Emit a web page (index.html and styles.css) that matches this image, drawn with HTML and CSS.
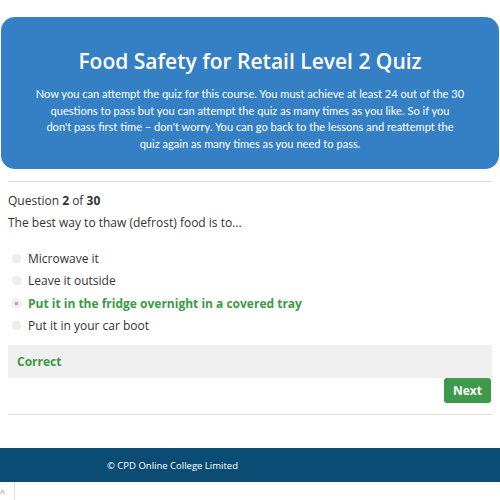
FILE: index.html
```html
<!DOCTYPE html>
<html lang="en">

<head>
    <meta charset="UTF-8">
    <meta name="viewport" content="width=device-width, initial-scale=1.0">
    <title>Food Safety for Retail Level 2 Quiz</title>
    <link rel="stylesheet" href="styles.css">
</head>

<body>
    <div class="hero">
        <h1>Food Safety for Retail Level 2 Quiz</h1>
        <p>Now you can attempt the quiz for this course. You must achieve at least 24 out of the 30<br>
            questions to pass but you can attempt the quiz as many times as you like. So if you<br>
            don't pass first time – don't worry. You can go back to the lessons and reattempt the<br>
            quiz again as many times as you need to pass.</p>
    </div>

    <div class="quiz">
        <hr class="rule">
        <div class="counter">Question <b>2</b> of <b>30</b></div>
        <div class="question">The best way to thaw (defrost) food is to...</div>

        <ul class="answers">
            <li><span class="radio"></span>Microwave it</li>
            <li><span class="radio"></span>Leave it outside</li>
            <li class="right"><span class="radio checked"></span>Put it in the fridge overnight in a covered tray</li>
            <li><span class="radio"></span>Put it in your car boot</li>
        </ul>

        <div class="feedback">Correct</div>
        <div class="actions">
            <button class="next-btn">Next</button>
        </div>
        <hr class="rule">
    </div>

    <footer class="footer">
        <span>© CPD Online College Limited</span>
    </footer>

    <div class="to-top">^</div>
</body>

</html>
```

FILE: styles.css
```css
body {
    margin: 0;
    font-family: "Open Sans", "Noto Sans", sans-serif;
    color: #333;
    background: white;
}

.hero {
    margin: 17px 1px 0 1px;
    height: 152px;
    box-sizing: border-box;
    padding: 27px 10px 0 10px;
    background-color: #3580c4;
    border-radius: 14px;
    color: white;
    text-align: center;
}

.hero h1 {
    margin: 0;
    font-size: 21px;
    font-weight: 600;
    line-height: 34px;
}

.hero p {
    margin: 8px 0 0 0;
    font-family: Lato, "Open Sans", sans-serif;
    font-size: 11.1px;
    line-height: 16.7px;
    white-space: nowrap;
}

.quiz {
    padding: 0 8px;
}

.rule {
    margin: 12px 0 0 0;
    border: none;
    border-top: 1px solid #ddd;
}

.counter {
    margin-top: 10px;
    font-size: 12px;
    line-height: 18px;
}

.question {
    margin-top: 4px;
    font-size: 12px;
    line-height: 18px;
}

.answers {
    list-style: none;
    margin: 15px 0 0 0;
    padding: 0;
}

.answers li {
    display: flex;
    align-items: center;
    height: 22.5px;
    font-size: 12px;
}

.answers li.right {
    color: #3a9a45;
    font-weight: 700;
}

.radio {
    width: 7px;
    height: 7px;
    margin: 0 7px 0 4px;
    border-radius: 50%;
    background: #efefef;
    border: 1px solid #e6e6e6;
}

.radio.checked {
    background: radial-gradient(circle, #aaa 1.5px, #efefef 2px);
}

.feedback {
    margin-top: 8px;
    height: 33px;
    padding: 0 9px;
    display: flex;
    align-items: center;
    background: #f0f0f0;
    color: #3a9a45;
    font-size: 12px;
    font-weight: 700;
}

.actions {
    display: flex;
    justify-content: flex-end;
    padding-right: 1px;
}

.next-btn {
    width: 47px;
    height: 25px;
    padding: 0;
    background-color: #3d9a4a;
    color: white;
    border: none;
    border-radius: 3px;
    font-family: inherit;
    font-size: 12px;
    font-weight: 700;
}

.actions + .rule {
    margin-top: 11px;
}

.footer {
    margin-top: 33px;
    height: 34px;
    display: flex;
    align-items: center;
    padding-left: 107px;
    background-color: #0b4c74;
    color: white;
    font-size: 9.5px;
}

.to-top {
    width: 14px;
    height: 18px;
    border-right: 1px solid #ddd;
    font-size: 9px;
    color: #888;
    line-height: 22px;
}
```
